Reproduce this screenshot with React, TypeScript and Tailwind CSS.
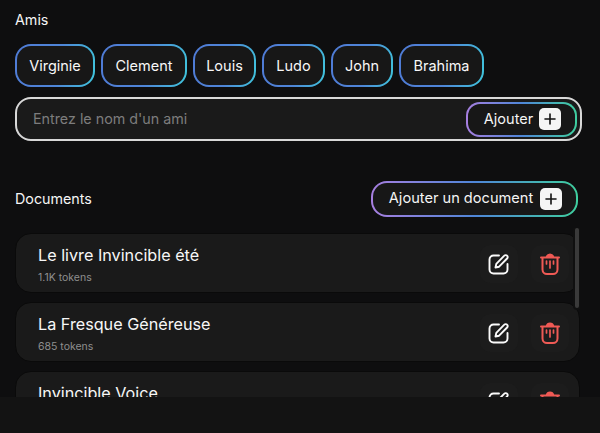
import React from "react";

const font = { fontFamily: '"Inter", "Liberation Sans", sans-serif' };

function Plus() {
  return (
    <span className="flex h-[22px] w-[22px] shrink-0 items-center justify-center rounded-[5px] bg-[#f5f5f5]">
      <svg width="14" height="14" viewBox="0 0 14 14" fill="none" stroke="#111" strokeWidth="1.6" strokeLinecap="round">
        <path d="M7 2v10M2 7h10" />
      </svg>
    </span>
  );
}

function Chip({ name, w }: { name: string; w: string }) {
  return (
    <div className={`flex h-[43px] shrink-0 items-center justify-center rounded-[16px] border-2 border-transparent text-[14.5px] text-[#f8f8f8] [background:linear-gradient(#171717,#171717)_padding-box,linear-gradient(100deg,#4f7bd6,#4f86d8_55%,#3fc6dc)_border-box] ${w}`}>
      {name}
    </div>
  );
}

function EditIcon() {
  return (
    <svg width="22" height="22" viewBox="0 0 22 22" fill="none" stroke="#fafafa" strokeWidth="1.9" strokeLinecap="round" strokeLinejoin="round">
      <path d="M11 2.500H5.500a4 4 0 0 0-4 4v10a4 4 0 0 0 4 4h10a4 4 0 0 0 4-4V11" />
      <path d="M7.500 14.500l.8-3.600 8-8.200a1.900 1.900 0 0 1 2.800 0 1.900 1.900 0 0 1 0 2.800l-8 8.200z" />
    </svg>
  );
}

function TrashIcon() {
  return (
    <svg width="20" height="22" viewBox="0 0 20 22" fill="none" stroke="#ef5a55" strokeWidth="2" strokeLinecap="round" strokeLinejoin="round">
      <path d="M1 4.500h18" />
      <path d="M6.500 4C7 2 8 1.200 10 1.200S13 2 13.500 4z" fill="#ef5a55" strokeWidth="1.400" />
      <path d="M2.500 5v11.500a4.500 4.500 0 0 0 4.500 4.500h6a4.500 4.500 0 0 0 4.500-4.500V5" />
      <path d="M6.500 8v3M10 8v7M13.500 8v3" strokeWidth="1.700" />
    </svg>
  );
}

function DocCard({ title, tokens }: { title: string; tokens: string }) {
  return (
    <div className="flex h-[60px] shrink-0 items-center justify-between rounded-[16px] border border-[#0a0a0a] bg-[#1a1a1a] pl-[22px] pr-[10px]">
      <div className="flex flex-col pt-[2px]">
        <span className="text-[16.2px] leading-[22px] text-[#f7f7f7]">{title}</span>
        <span className="mt-[5px] text-[10.500px] leading-[14px] text-[#8f8f8f]">{tokens}</span>
      </div>
      <div className="flex items-center gap-[13px] pt-[2px]">
        <span className="flex h-[38px] w-[38px] items-center justify-center rounded-[10px] bg-[#1c1c1c]">
          <EditIcon />
        </span>
        <span className="flex h-[38px] w-[38px] items-center justify-center rounded-[10px] bg-[#1c1c1c]">
          <TrashIcon />
        </span>
      </div>
    </div>
  );
}

export default function App() {
  return (
    <div style={font} className="flex h-[433px] w-[600px] flex-col overflow-hidden bg-[#0e0e0f] text-white">
      <div className="flex h-[397px] shrink-0 flex-col pl-[15px] pr-[20px] pt-[11px]">
        <div className="text-[14.3px] leading-[18px] text-[#f5f5f5]">Amis</div>
        <div className="mt-[15px] flex gap-[6px]">
          <Chip name="Virginie" w="w-[80px]" />
          <Chip name="Clement" w="w-[86px]" />
          <Chip name="Louis" w="w-[63px]" />
          <Chip name="Ludo" w="w-[63px]" />
          <Chip name="John" w="w-[62px]" />
          <Chip name="Brahima" w="w-[85px]" />
        </div>
        <div className="mt-[10px] flex h-[44px] w-[567px] shrink-0 items-center justify-between rounded-[16px] border-2 border-[#d8d8d8] bg-[#1a1a1a] pl-[16px] pr-[3px]">
          <span className="text-[14.3px] text-[#7d7d7d]">Entrez le nom d'un ami</span>
          <div className="flex h-[35px] w-[111px] items-center justify-center gap-[6px] rounded-[14px] border-2 border-transparent pl-[2px] text-[14.5px] text-[#f5f5f5] [background:linear-gradient(#171717,#171717)_padding-box,linear-gradient(90deg,#a77fe0,#4f86d8_50%,#3fcf9f)_border-box]">
            Ajouter
            <Plus />
          </div>
        </div>
        <div className="mt-[40px] flex h-[36px] shrink-0 items-center justify-between pr-[2px]">
          <span className="text-[14.3px] text-[#f5f5f5]">Documents</span>
          <div className="flex h-[36px] w-[207px] items-center justify-center gap-[7px] rounded-[16px] border-2 border-transparent pl-[2px] text-[14.6px] text-[#f5f5f5] [background:linear-gradient(#171717,#171717)_padding-box,linear-gradient(90deg,#a77fe0,#4f86d8_50%,#3fcf9f)_border-box]">
            Ajouter un document
            <Plus />
          </div>
        </div>
        <div className="relative mt-[11px] flex min-h-0 flex-1 flex-col gap-[9px] overflow-hidden pt-[5px]">
          <DocCard title="Le livre Invincible été" tokens="1.1K tokens" />
          <DocCard title="La Fresque Généreuse" tokens="685 tokens" />
          <DocCard title="Invincible Voice" tokens={"\u00a0"} />
          <div className="absolute right-px top-0 h-[80px] w-[4px] rounded-full bg-[#3a3a3a] ring-2 ring-[#101010]" />
        </div>
      </div>
      <div className="flex-1 bg-[#131313]" />
    </div>
  );
}
